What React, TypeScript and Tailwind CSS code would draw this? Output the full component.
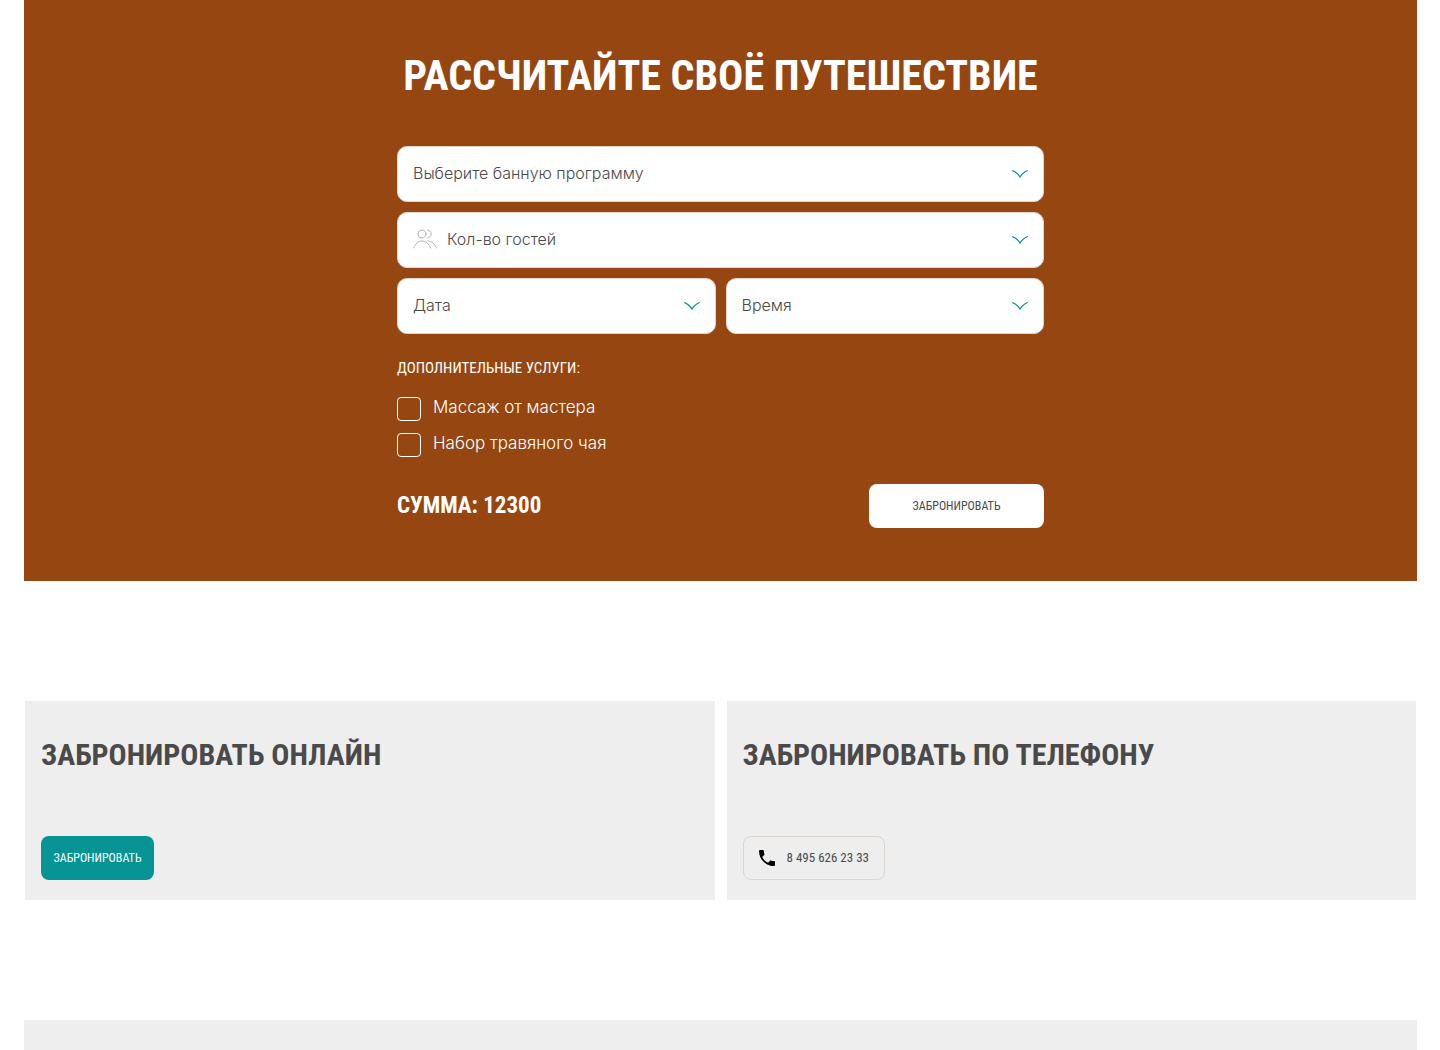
import { useState } from 'react';
import type { ReactNode } from 'react';

const EXTRAS = [
  { id: 'massage', label: 'Массаж от мастера' },
  { id: 'tea', label: 'Набор травяного чая' },
];

function ChevronIcon() {
  return (
    <svg
      viewBox="0 0 16 8"
      className="pointer-events-none absolute right-4 top-6 h-2 w-4"
      fill="none"
      stroke="#069393"
      strokeWidth="1.3"
      aria-hidden="true"
    >
      <path d="M0.2 0.5C3.2 1.6 6.2 4 8 7C9.8 4 12.8 1.6 15.8 0.5" />
    </svg>
  );
}

function GuestsIcon() {
  return (
    <svg
      viewBox="0 0 24 20"
      className="pointer-events-none absolute left-4 top-[17px] h-5 w-6"
      fill="none"
      stroke="#b5b3b1"
      strokeWidth="1"
      strokeLinecap="round"
      aria-hidden="true"
    >
      <circle cx="9" cy="5" r="4" />
      <path d="M14.6 1.1C16.6 1.1 18.2 2.8 18.2 5C18.2 7.2 16.6 8.9 14.6 8.9" />
      <path d="M0.6 19C2.4 14.6 5.4 12 9 12C12.8 12 15.8 14.6 17.6 19" />
      <path d="M15 12C18.8 12 21.8 14.6 23.4 19" />
    </svg>
  );
}

function PhoneIcon() {
  return (
    <svg viewBox="3 3 18 18" className="h-4 w-4" fill="#000" aria-hidden="true">
      <path d="M6.62 10.79c1.44 2.83 3.76 5.14 6.59 6.59l2.2-2.2c.27-.27.67-.36 1.02-.24 1.12.37 2.33.57 3.57.57.55 0 1 .45 1 1V20c0 .55-.45 1-1 1-9.39 0-17-7.61-17-17 0-.55.45-1 1-1h3.5c.55 0 1 .45 1 1 0 1.25.2 2.45.57 3.57.11.35.03.74-.25 1.02l-2.2 2.2z" />
    </svg>
  );
}

interface SelectFieldProps {
  id: string;
  label: string;
  icon?: ReactNode;
}

function SelectField({ id, label, icon }: SelectFieldProps) {
  return (
    <div className="relative">
      {icon}
      <select
        id={id}
        aria-label={label}
        className={`block h-14 w-full appearance-none rounded-[10px] border border-[#ded5cf] bg-white pb-0.5 pr-12 text-base font-light text-[#4a4a4a] ${icon ? 'pl-[49px]' : 'pl-[15px]'}`}
      >
        <option>{label}</option>
      </select>
      <ChevronIcon />
    </div>
  );
}

function Calculator() {
  const [selected, setSelected] = useState<string[]>([]);

  const toggle = (id: string) => {
    setSelected((prev) => (prev.includes(id) ? prev.filter((x) => x !== id) : [...prev, id]));
  };

  return (
    <section className="bg-[#964611] px-4 pb-[53px] pt-8 text-white">
      <h1 className="text-center font-['Roboto_Condensed','Liberation_Sans_Narrow',sans-serif] text-[42px] font-bold leading-[88px]">
        РАССЧИТАЙТЕ СВОЁ ПУТЕШЕСТВИЕ
      </h1>
      <form className="mx-auto mt-[26px] max-w-[647px]" onSubmit={(e) => e.preventDefault()}>
        <div className="flex flex-col gap-2.5">
          <SelectField id="program" label="Выберите банную программу" />
          <SelectField id="guests" label="Кол-во гостей" icon={<GuestsIcon />} />
          <div className="grid grid-cols-2 gap-2.5">
            <SelectField id="date" label="Дата" />
            <SelectField id="time" label="Время" />
          </div>
        </div>

        <fieldset className="mt-5">
          <legend className="font-['Roboto_Condensed','Liberation_Sans_Narrow',sans-serif] text-[15px] leading-7">
            ДОПОЛНИТЕЛЬНЫЕ УСЛУГИ:
          </legend>
          <div className="mt-[15px] flex flex-col gap-3">
            {EXTRAS.map((extra) => (
              <label key={extra.id} htmlFor={extra.id} className="flex h-6 items-start gap-3 text-[17px] font-light leading-5">
                <input
                  id={extra.id}
                  type="checkbox"
                  checked={selected.includes(extra.id)}
                  onChange={() => toggle(extra.id)}
                  className="h-6 w-6 shrink-0 appearance-none rounded border border-white checked:bg-white"
                />
                {extra.label}
              </label>
            ))}
          </div>
        </fieldset>

        <div className="mt-[27px] flex items-center justify-between">
          <p className="font-['Roboto_Condensed','Liberation_Sans_Narrow',sans-serif] text-[23px] font-bold">
            СУММА: 12300
          </p>
          <button
            type="submit"
            className="h-11 w-[175px] rounded-lg bg-white font-['Roboto_Condensed','Liberation_Sans_Narrow',sans-serif] text-xs text-[#4a4a4a]"
          >
            ЗАБРОНИРОВАТЬ
          </button>
        </div>
      </form>
    </section>
  );
}

function BookingCard({ title, children }: { title: string; children: ReactNode }) {
  return (
    <article className="flex flex-col items-start bg-[#eee] px-4 pb-5 pt-6">
      <h2 className="font-['Roboto_Condensed','Liberation_Sans_Narrow',sans-serif] text-3xl font-bold leading-[60px] text-[#4a4a4a]">
        {title}
      </h2>
      <div className="mt-[51px]">{children}</div>
    </article>
  );
}

export default function App() {
  return (
    <main className="bg-white pl-6 pr-[23px] font-['Inter',sans-serif]">
      <Calculator />
      <section className="mt-[120px] grid grid-cols-2 gap-3 px-px">
        <BookingCard title="ЗАБРОНИРОВАТЬ ОНЛАЙН">
          <button
            type="button"
            className="h-11 w-[113px] rounded-lg bg-[#069393] font-['Roboto_Condensed','Liberation_Sans_Narrow',sans-serif] text-xs text-white"
          >
            ЗАБРОНИРОВАТЬ
          </button>
        </BookingCard>
        <BookingCard title="ЗАБРОНИРОВАТЬ ПО ТЕЛЕФОНУ">
          <a
            href="tel:84956262333"
            className="flex h-11 w-[142px] items-center gap-3 rounded-lg border border-[#ddd5ce] pl-[15px] font-['Roboto_Condensed','Liberation_Sans_Narrow',sans-serif] text-[13px] text-[#4a4a4a]"
          >
            <PhoneIcon />
            8 495 626 23 33
          </a>
        </BookingCard>
      </section>
      <section className="mt-[120px] h-[30px] bg-[#eee]" />
    </main>
  );
}
